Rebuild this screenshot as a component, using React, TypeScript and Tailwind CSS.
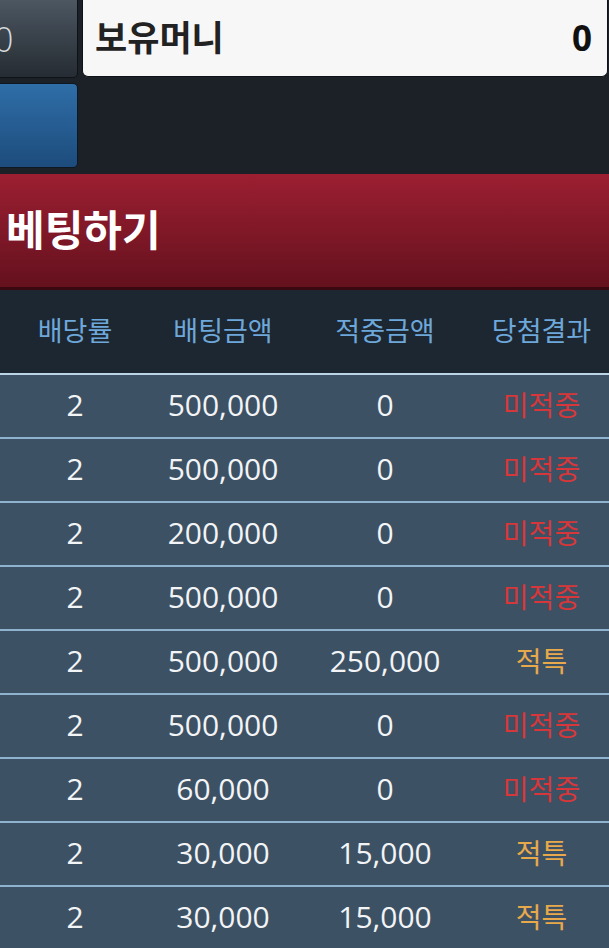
import React from "react";

const rows: [string, string, string, "miss" | "hit"][] = [
  ["2", "500,000", "0", "miss"],
  ["2", "500,000", "0", "miss"],
  ["2", "200,000", "0", "miss"],
  ["2", "500,000", "0", "miss"],
  ["2", "500,000", "250,000", "hit"],
  ["2", "500,000", "0", "miss"],
  ["2", "60,000", "0", "miss"],
  ["2", "30,000", "15,000", "hit"],
  ["2", "30,000", "15,000", "hit"],
];

const font = { fontFamily: '"Open Sans", "Noto Sans CJK KR", sans-serif' };

export default function App() {
  return (
    <div className="w-[609px] h-[948px] overflow-hidden bg-[#1c2127]" style={font}>
      {/* top section */}
      <div className="flex h-[174px]">
        <div className="w-[78px] flex flex-col">
          <div className="h-[78px] bg-gradient-to-b from-[#4c5762] to-[#262c33] border-r border-b border-[#0e1318] rounded-br-[5px] flex items-center overflow-hidden">
            <span className="ml-[-6px] text-[34px] font-light leading-none text-[#d5dade]">0</span>
          </div>
          <div className="mt-[5px] h-[85px] bg-gradient-to-b from-[#2f6ea8] to-[#1d4c7c] border border-l-0 border-[#0e1822] rounded-r-[5px]"></div>
        </div>
        <div className="ml-[4px] w-[526px] h-[77px] bg-[#f7f7f7] border border-t-0 border-[#0e1318] rounded-b-[6px] flex items-center justify-between pl-[12px] pr-[15px]">
          <span className="text-[35px] font-bold text-[#222]">보유머니</span>
          <span className="text-[35px] font-bold text-[#111]">0</span>
        </div>
      </div>
      {/* red header */}
      <div className="h-[116px] bg-gradient-to-b from-[#9c1f31] to-[#65111e] border-b-[3px] border-[#3a0810] flex items-center pl-[6px]">
        <span className="text-[42px] font-bold text-white pb-[2px]">베팅하기</span>
      </div>
      {/* table header */}
      <div className="h-[85px] bg-[#1d2731] grid grid-cols-[150px_146px_178px_135px] items-center text-[27px] text-[#6ea8db] border-b-[2px] border-[#bcd4e6]">
        <div className="text-center">배당률</div>
        <div className="text-center">배팅금액</div>
        <div className="text-center">적중금액</div>
        <div className="text-center">당첨결과</div>
      </div>
      {rows.map((r, i) => (
        <div
          key={i}
          className="h-[64px] bg-[#3d5164] grid grid-cols-[150px_146px_178px_135px] items-center text-[30px] leading-none text-[#f2f4f6] border-b-[2px] border-[#8fb2ce]"
        >
          <div className="text-center pb-[2px]">{r[0]}</div>
          <div className="text-center pb-[2px]">{r[1]}</div>
          <div className="text-center pb-[2px]">{r[2]}</div>
          <div className={"text-center text-[28px] pb-[2px] " + (r[3] === "miss" ? "text-[#d7373a]" : "text-[#e8a94c]")}>
            {r[3] === "miss" ? "미적중" : "적특"}
          </div>
        </div>
      ))}
    </div>
  );
}
